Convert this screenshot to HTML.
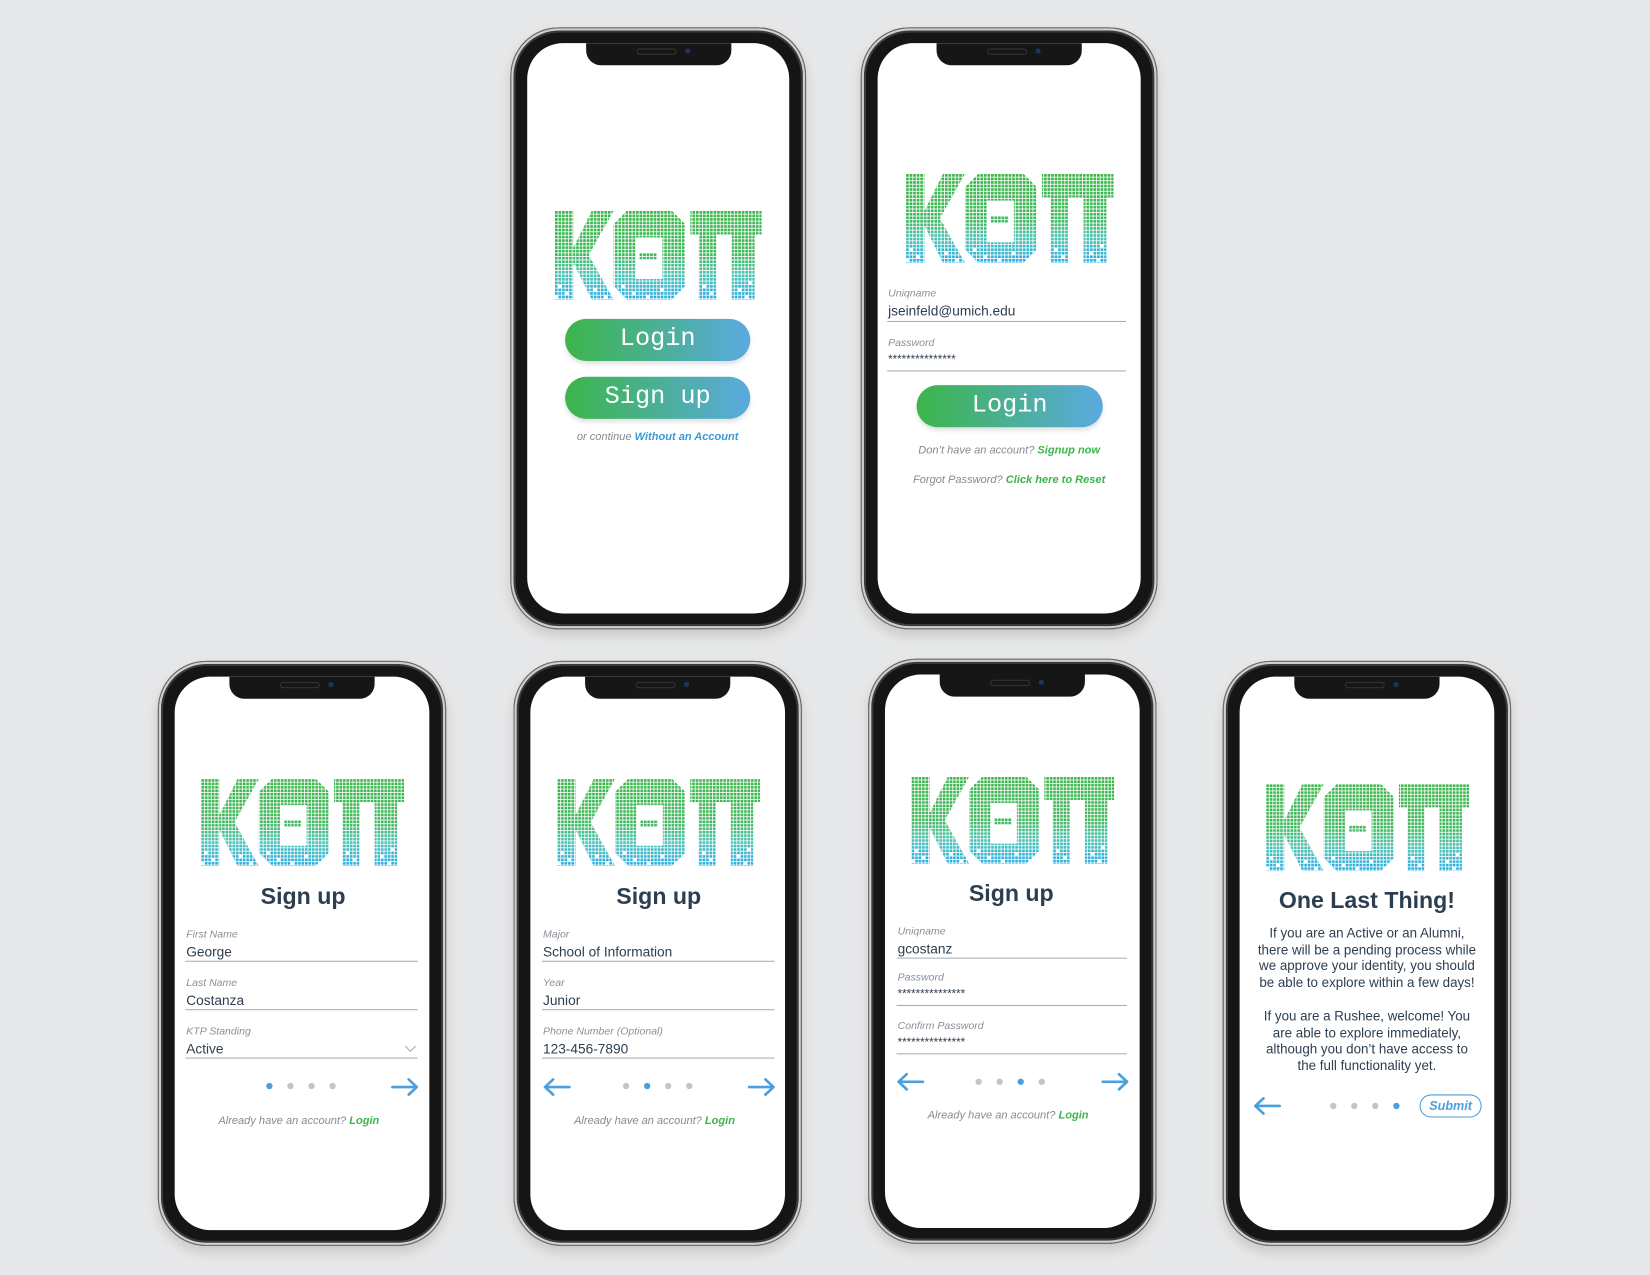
<!DOCTYPE html>
<html><head><meta charset="utf-8">
<style>
html,body{margin:0;padding:0;width:1650px;height:1275px;overflow:hidden;background:#e6e7e8;}
#w{position:absolute;left:0;top:0;width:1568px;height:1212px;transform:scale(1.05230);transform-origin:0 0;font-family:"Liberation Sans",sans-serif;}
.ph{position:absolute;border-radius:46px;background:#151515;box-shadow:inset 0 0 0 1px #666,inset 0 0 0 3px #cfcfcf,inset 0 0 0 5px #3a3a3a,0 6px 10px rgba(0,0,0,.12);}
.sc{position:absolute;left:16px;right:16px;top:15px;bottom:15px;background:#fff;border-radius:34px;overflow:hidden;}
.notch{position:absolute;top:0;left:50%;width:138px;margin-left:-69px;height:21px;background:#161616;border-radius:0 0 14px 14px;}
.notch:before{content:"";position:absolute;left:48px;top:5px;width:36px;height:4px;border-radius:3px;border:1px solid #333;}
.notch:after{content:"";position:absolute;left:94px;top:5px;width:5px;height:5px;border-radius:50%;background:#1b3560;}
.t{position:absolute;white-space:nowrap;}
.lbl{font-size:10px;font-style:italic;color:#8a8f98;line-height:12px;}
.val{font-size:13px;color:#2c3e50;line-height:15px;}
.ln{position:absolute;height:1px;background:#a8adb5;}
.btn{position:absolute;border-radius:21px;background:linear-gradient(90deg,#3cb54a,#5aaae0);color:#fff;font-family:"Liberation Mono",monospace;font-size:24px;text-align:center;box-shadow:0 3px 4px rgba(0,0,0,.12);}
.sm{font-size:10.5px;font-style:italic;color:#858a92;line-height:12px;text-align:center;}
.g{color:#3cb54a;font-weight:bold;}
.b{color:#3a9ad9;font-weight:bold;}
.h{font-weight:bold;font-size:22px;color:#2c3e50;text-align:center;line-height:26px;}
.dot{position:absolute;width:6px;height:6px;border-radius:50%;background:#c4c4c4;}
.dot.on{background:#4a9fdc;}
.p{font-size:12.7px;color:#2c3e50;line-height:15.7px;text-align:center;}
</style></head><body>
<svg width="0" height="0" style="position:absolute">
<defs>
<linearGradient id="lg" gradientUnits="userSpaceOnUse" x1="0" y1="0" x2="0" y2="85">
<stop offset="0" stop-color="#3cb54a"/><stop offset="0.5" stop-color="#3db75a"/><stop offset="0.72" stop-color="#4cc0ae"/><stop offset="1" stop-color="#27aee6"/>
</linearGradient>
<pattern id="gp" patternUnits="userSpaceOnUse" width="3.4" height="3.4"><rect x="0.4" y="0.4" width="2.6" height="2.6" fill="#fff"/></pattern>
<mask id="mk" maskUnits="userSpaceOnUse" x="0" y="0" width="200" height="90">
<rect x="0" y="0" width="200" height="90" fill="url(#gp)"/>
<g fill="#000">
<rect x="3.4" y="71.4" width="3.4" height="3.4"/><rect x="10.2" y="78.2" width="3.4" height="3.4"/><rect x="0" y="81.6" width="3.4" height="3.4"/>
<rect x="37.4" y="74.8" width="3.4" height="3.4"/><rect x="47.6" y="81.6" width="3.4" height="3.4"/>
<rect x="64.6" y="71.4" width="3.4" height="3.4"/><rect x="74.8" y="78.2" width="3.4" height="3.4"/><rect x="88.4" y="81.6" width="3.4" height="3.4"/><rect x="102" y="74.8" width="3.4" height="3.4"/><rect x="115.6" y="81.6" width="3.4" height="3.4"/>
<rect x="142.8" y="71.4" width="3.4" height="3.4"/><rect x="149.6" y="78.2" width="3.4" height="3.4"/>
<rect x="176.8" y="74.8" width="3.4" height="3.4"/><rect x="187" y="68" width="3.4" height="3.4"/><rect x="183.6" y="81.6" width="3.4" height="3.4"/>
</g>
</mask>
<symbol id="logo" viewBox="0 0 200 86">
<g mask="url(#mk)" fill="url(#lg)">
<rect x="0" y="0" width="18" height="86"/>
<polygon points="18,36 36,0 57,0 33,43 57,86 36,86 18,50"/>
<path fill-rule="evenodd" d="M70 0H113L126 13V73L113 86H70L57 73V13ZM78 26V66H104V26Z"/>
<rect x="82" y="41" width="17" height="6"/>
<rect x="131" y="0" width="69" height="23"/>
<rect x="139" y="0" width="17" height="86"/>
<rect x="171" y="0" width="22" height="86"/>
</g>
</symbol>
<symbol id="ar" viewBox="0 0 28 18"><path d="M2 9H26M18 1.5L26 9L18 16.5" fill="none" stroke="#4a9fdc" stroke-width="2.6" stroke-linecap="round" stroke-linejoin="round"/></symbol>
<symbol id="al" viewBox="0 0 28 18"><path d="M26 9H2M10 1.5L2 9L10 16.5" fill="none" stroke="#4a9fdc" stroke-width="2.6" stroke-linecap="round" stroke-linejoin="round"/></symbol>
</defs></svg>
<div id="w">
<div class="ph" style="left:485px;top:26px;width:281px;height:572px"><div class="sc"><div class="notch"></div></div></div>
<div class="ph" style="left:818px;top:26px;width:282px;height:572px"><div class="sc"><div class="notch"></div></div></div>
<div class="ph" style="left:150px;top:628px;width:274px;height:556px"><div class="sc"><div class="notch"></div></div></div>
<div class="ph" style="left:488px;top:628px;width:274px;height:556px"><div class="sc"><div class="notch"></div></div></div>
<div class="ph" style="left:825px;top:626px;width:274px;height:556px"><div class="sc"><div class="notch"></div></div></div>
<div class="ph" style="left:1162px;top:628px;width:274px;height:556px"><div class="sc"><div class="notch"></div></div></div>

<!-- Phone A -->
<svg class="t" style="left:527px;top:200px" width="197" height="85"><use href="#logo"/></svg>
<div class="btn" style="left:537px;top:303px;width:176px;height:40px;line-height:40px">Login</div>
<div class="btn" style="left:537px;top:358px;width:176px;height:40px;line-height:40px">Sign up</div>
<div class="t sm" style="left:525px;width:200px;top:409px">or continue <span class="b">Without an Account</span></div>

<!-- Phone B -->
<svg class="t" style="left:860px;top:165px" width="199" height="85"><use href="#logo"/></svg>
<div class="t lbl" style="left:844px;top:274px">Uniqname</div>
<div class="t val" style="left:844px;top:288px">jseinfeld@umich.edu</div>
<div class="ln" style="left:843px;top:305px;width:227px"></div>
<div class="t lbl" style="left:844px;top:321px">Password</div>
<div class="t val" style="left:844px;top:335px;font-size:11px">***************</div>
<div class="ln" style="left:843px;top:352px;width:227px"></div>
<div class="btn" style="left:871px;top:366px;width:177px;height:40px;line-height:40px">Login</div>
<div class="t sm" style="left:859px;width:200px;top:422px">Don’t have an account? <span class="g">Signup now</span></div>
<div class="t sm" style="left:859px;width:200px;top:450px">Forgot Password? <span class="g">Click here to Reset</span></div>

<!-- Phone C -->
<svg class="t" style="left:191px;top:740px" width="193" height="83"><use href="#logo"/></svg>
<div class="t h" style="left:188px;width:200px;top:839px">Sign up</div>
<div class="t lbl" style="left:177px;top:883px">First Name</div>
<div class="t val" style="left:177px;top:897px">George</div>
<div class="ln" style="left:176px;top:913px;width:221px"></div>
<div class="t lbl" style="left:177px;top:929px">Last Name</div>
<div class="t val" style="left:177px;top:943px">Costanza</div>
<div class="ln" style="left:176px;top:959px;width:221px"></div>
<div class="t lbl" style="left:177px;top:975px">KTP Standing</div>
<div class="t val" style="left:177px;top:989px">Active</div>
<svg class="t" style="left:384px;top:993px" width="12" height="8"><path d="M1 1L6 6L11 1" fill="none" stroke="#aaa" stroke-width="1"/></svg>
<div class="ln" style="left:176px;top:1005px;width:221px"></div>
<div class="dot on" style="left:253px;top:1029px"></div><div class="dot" style="left:273px;top:1029px"></div><div class="dot" style="left:293px;top:1029px"></div><div class="dot" style="left:313px;top:1029px"></div>
<svg class="t" style="left:371px;top:1024px" width="27" height="18"><use href="#ar"/></svg>
<div class="t sm" style="left:184px;width:200px;top:1059px">Already have an account? <span class="g">Login</span></div>

<!-- Phone D -->
<svg class="t" style="left:529px;top:740px" width="194" height="83"><use href="#logo"/></svg>
<div class="t h" style="left:526px;width:200px;top:839px">Sign up</div>
<div class="t lbl" style="left:516px;top:883px">Major</div>
<div class="t val" style="left:516px;top:897px">School of Information</div>
<div class="ln" style="left:515px;top:913px;width:221px"></div>
<div class="t lbl" style="left:516px;top:929px">Year</div>
<div class="t val" style="left:516px;top:943px">Junior</div>
<div class="ln" style="left:515px;top:959px;width:221px"></div>
<div class="t lbl" style="left:516px;top:975px">Phone Number (Optional)</div>
<div class="t val" style="left:516px;top:989px">123-456-7890</div>
<div class="ln" style="left:515px;top:1005px;width:221px"></div>
<svg class="t" style="left:516px;top:1024px" width="27" height="18"><use href="#al"/></svg>
<div class="dot" style="left:592px;top:1029px"></div><div class="dot on" style="left:612px;top:1029px"></div><div class="dot" style="left:632px;top:1029px"></div><div class="dot" style="left:652px;top:1029px"></div>
<svg class="t" style="left:710px;top:1024px" width="27" height="18"><use href="#ar"/></svg>
<div class="t sm" style="left:522px;width:200px;top:1059px">Already have an account? <span class="g">Login</span></div>

<!-- Phone E -->
<svg class="t" style="left:866px;top:738px" width="193" height="83"><use href="#logo"/></svg>
<div class="t h" style="left:861px;width:200px;top:836px">Sign up</div>
<div class="t lbl" style="left:853px;top:880px">Uniqname</div>
<div class="t val" style="left:853px;top:894px">gcostanz</div>
<div class="ln" style="left:852px;top:910px;width:219px"></div>
<div class="t lbl" style="left:853px;top:924px">Password</div>
<div class="t val" style="left:853px;top:938px;font-size:11px">***************</div>
<div class="ln" style="left:852px;top:955px;width:219px"></div>
<div class="t lbl" style="left:853px;top:970px">Confirm Password</div>
<div class="t val" style="left:853px;top:984px;font-size:11px">***************</div>
<div class="ln" style="left:852px;top:1001px;width:219px"></div>
<svg class="t" style="left:852px;top:1019px" width="27" height="18"><use href="#al"/></svg>
<div class="dot" style="left:927px;top:1025px"></div><div class="dot" style="left:947px;top:1025px"></div><div class="dot on" style="left:967px;top:1025px"></div><div class="dot" style="left:987px;top:1025px"></div>
<svg class="t" style="left:1046px;top:1019px" width="27" height="18"><use href="#ar"/></svg>
<div class="t sm" style="left:858px;width:200px;top:1054px">Already have an account? <span class="g">Login</span></div>

<!-- Phone F -->
<svg class="t" style="left:1203px;top:745px" width="193" height="83"><use href="#logo"/></svg>
<div class="t h" style="left:1189px;width:220px;top:843px">One Last Thing!</div>
<div class="t p" style="left:1179px;width:240px;top:880px">If you are an Active or an Alumni,<br>there will be a pending process while<br>we approve your identity, you should<br>be able to explore within a few days!</div>
<div class="t p" style="left:1179px;width:240px;top:959px">If you are a Rushee, welcome! You<br>are able to explore immediately,<br>although you don’t have access to<br>the full functionality yet.</div>
<svg class="t" style="left:1191px;top:1042px" width="27" height="18"><use href="#al"/></svg>
<div class="dot" style="left:1264px;top:1048px"></div><div class="dot" style="left:1284px;top:1048px"></div><div class="dot" style="left:1304px;top:1048px"></div><div class="dot on" style="left:1324px;top:1048px"></div>
<div class="t" style="left:1349px;top:1040px;width:57px;height:20px;border:1.3px solid #4a9fdc;border-radius:11px;color:#4a9fdc;font-size:12px;font-style:italic;font-weight:bold;text-align:center;line-height:20px">Submit</div>
</div>
</body></html>
